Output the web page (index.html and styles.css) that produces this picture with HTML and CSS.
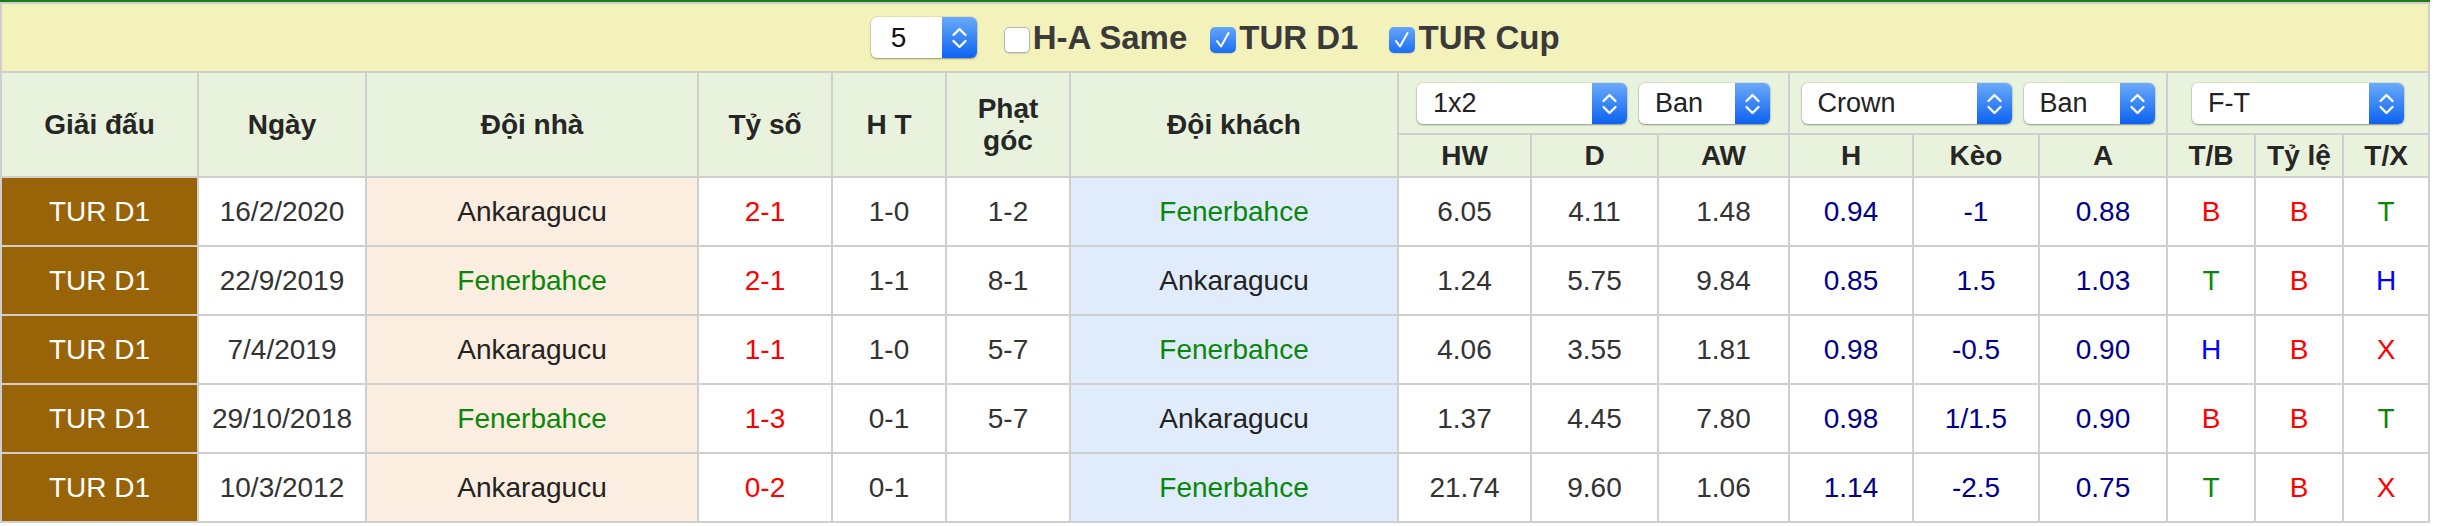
FILE: index.html
```html
<!DOCTYPE html>
<html lang="vi">
<head>
<meta charset="utf-8">
<title>Đối đầu</title>
<link rel="stylesheet" href="styles.css">
</head>
<body>
<div class="wrap">
<table class="tb">
<colgroup>
<col class="w-league"><col class="w-date"><col class="w-home"><col class="w-score"><col class="w-ht"><col class="w-corner"><col class="w-away">
<col class="w-hw"><col class="w-d"><col class="w-aw"><col class="w-h"><col class="w-keo"><col class="w-a"><col class="w-tb"><col class="w-tl"><col class="w-tx">
</colgroup>
<tr class="filter-row">
<td colspan="16" class="filter-cell">
<div class="filters">
<div class="sel sel-n"><span class="txt">5</span><span class="btn"><svg viewBox="0 0 35 41" width="35" height="41"><polyline points="11.5,18 17.5,12 23.5,18" /><polyline points="11.5,24 17.5,30 23.5,24" /></svg></span></div>
<label class="chk first"><span class="box"></span>H-A Same</label>
<label class="chk"><span class="box on"><svg viewBox="0 0 26 26" width="26" height="26"><polyline points="7,14 11,19.5 18.5,6" /></svg></span>TUR D1</label>
<label class="chk last"><span class="box on"><svg viewBox="0 0 26 26" width="26" height="26"><polyline points="7,14 11,19.5 18.5,6" /></svg></span>TUR Cup</label>
</div>
</td>
</tr>
<tr class="hd1">
<th rowspan="2">Giải đấu</th>
<th rowspan="2">Ngày</th>
<th rowspan="2">Đội nhà</th>
<th rowspan="2">Tỷ số</th>
<th rowspan="2">H T</th>
<th rowspan="2"><span class="narrow">Phạt góc</span></th>
<th rowspan="2">Đội khách</th>
<th colspan="3"><div class="sels"><div class="sel s-wide"><span class="txt">1x2</span><span class="btn"><svg viewBox="0 0 35 41" width="35" height="41"><polyline points="11.5,18 17.5,12 23.5,18" /><polyline points="11.5,24 17.5,30 23.5,24" /></svg></span></div><div class="sel s-narrow"><span class="txt">Ban</span><span class="btn"><svg viewBox="0 0 35 41" width="35" height="41"><polyline points="11.5,18 17.5,12 23.5,18" /><polyline points="11.5,24 17.5,30 23.5,24" /></svg></span></div></div></th>
<th colspan="3"><div class="sels"><div class="sel s-wide"><span class="txt">Crown</span><span class="btn"><svg viewBox="0 0 35 41" width="35" height="41"><polyline points="11.5,18 17.5,12 23.5,18" /><polyline points="11.5,24 17.5,30 23.5,24" /></svg></span></div><div class="sel s-narrow"><span class="txt">Ban</span><span class="btn"><svg viewBox="0 0 35 41" width="35" height="41"><polyline points="11.5,18 17.5,12 23.5,18" /><polyline points="11.5,24 17.5,30 23.5,24" /></svg></span></div></div></th>
<th colspan="3"><div class="sels"><div class="sel s-ft"><span class="txt">F-T</span><span class="btn"><svg viewBox="0 0 35 41" width="35" height="41"><polyline points="11.5,18 17.5,12 23.5,18" /><polyline points="11.5,24 17.5,30 23.5,24" /></svg></span></div></div></th>
</tr>
<tr class="hd2">
<th>HW</th><th>D</th><th>AW</th><th>H</th><th>Kèo</th><th>A</th><th>T/B</th><th>Tỷ lệ</th><th>T/X</th>
</tr>
<tr class="row">
<td class="lg">TUR D1</td><td class="dt">16/2/2020</td><td class="home">Ankaragucu</td><td class="sc">2-1</td><td class="dt">1-0</td><td class="dt">1-2</td><td class="away gr">Fenerbahce</td>
<td class="dt">6.05</td><td class="dt">4.11</td><td class="dt">1.48</td><td class="nv">0.94</td><td class="nv">-1</td><td class="nv">0.88</td><td class="r">B</td><td class="r">B</td><td class="g">T</td>
</tr>
<tr class="row">
<td class="lg">TUR D1</td><td class="dt">22/9/2019</td><td class="home gr">Fenerbahce</td><td class="sc">2-1</td><td class="dt">1-1</td><td class="dt">8-1</td><td class="away">Ankaragucu</td>
<td class="dt">1.24</td><td class="dt">5.75</td><td class="dt">9.84</td><td class="nv">0.85</td><td class="nv">1.5</td><td class="nv">1.03</td><td class="g">T</td><td class="r">B</td><td class="b">H</td>
</tr>
<tr class="row">
<td class="lg">TUR D1</td><td class="dt">7/4/2019</td><td class="home">Ankaragucu</td><td class="sc">1-1</td><td class="dt">1-0</td><td class="dt">5-7</td><td class="away gr">Fenerbahce</td>
<td class="dt">4.06</td><td class="dt">3.55</td><td class="dt">1.81</td><td class="nv">0.98</td><td class="nv">-0.5</td><td class="nv">0.90</td><td class="b">H</td><td class="r">B</td><td class="r">X</td>
</tr>
<tr class="row">
<td class="lg">TUR D1</td><td class="dt">29/10/2018</td><td class="home gr">Fenerbahce</td><td class="sc">1-3</td><td class="dt">0-1</td><td class="dt">5-7</td><td class="away">Ankaragucu</td>
<td class="dt">1.37</td><td class="dt">4.45</td><td class="dt">7.80</td><td class="nv">0.98</td><td class="nv">1/1.5</td><td class="nv">0.90</td><td class="r">B</td><td class="r">B</td><td class="g">T</td>
</tr>
<tr class="row">
<td class="lg">TUR D1</td><td class="dt">10/3/2012</td><td class="home">Ankaragucu</td><td class="sc">0-2</td><td class="dt">0-1</td><td class="dt"></td><td class="away gr">Fenerbahce</td>
<td class="dt">21.74</td><td class="dt">9.60</td><td class="dt">1.06</td><td class="nv">1.14</td><td class="nv">-2.5</td><td class="nv">0.75</td><td class="g">T</td><td class="r">B</td><td class="r">X</td>
</tr>
</table>
</div>
</body>
</html>
```

FILE: styles.css
```css
html, body {
  margin: 0;
  padding: 0;
  background: #ffffff;
}

body {
  font-family: "Liberation Sans", Arial, sans-serif;
  color: #333333;
}

.wrap {
  width: 2430px;
  border-top: 2px solid #1c7a1c;
}

.tb {
  width: 2430px;
  table-layout: fixed;
  border-collapse: separate;
  border-spacing: 2px;
  background: #cfcfcf;
}

.w-league { width: 195px; }
.w-date { width: 166px; }
.w-home { width: 330px; }
.w-score { width: 132px; }
.w-ht { width: 112px; }
.w-corner { width: 122px; }
.w-away { width: 326px; }
.w-hw { width: 131px; }
.w-d { width: 125px; }
.w-aw { width: 129px; }
.w-h { width: 122px; }
.w-keo { width: 124px; }
.w-a { width: 126px; }
.w-tb { width: 86px; }
.w-tl { width: 86px; }
.w-tx { width: 84px; }

td, th {
  padding: 0;
  text-align: center;
  vertical-align: middle;
}

/* filter row */
.filter-cell {
  background: #f4f2bb;
  height: 67px;
}

.filters {
  display: flex;
  justify-content: center;
  align-items: center;
  font-size: 33px;
  font-weight: bold;
  color: #3a3a3a;
}

.chk {
  display: flex;
  align-items: center;
  margin-left: 23px;
}

.chk.first {
  margin-left: 27px;
}

.chk.last {
  margin-left: 31px;
}

.box {
  width: 26px;
  height: 26px;
  box-sizing: border-box;
  border: 1px solid #b3b3b3;
  border-radius: 5px;
  background: #ffffff;
  margin-right: 3px;
  margin-top: 4px;
  display: flex;
  box-shadow: 0 1px 1px rgba(0, 0, 0, 0.12);
}

.box.on {
  border: none;
  background: linear-gradient(#66a6fa, #1a6ef4);
}

.box svg polyline {
  fill: none;
  stroke: #ffffff;
  stroke-width: 2;
  stroke-linecap: round;
  stroke-linejoin: round;
}

/* select look-alike */
.sel {
  display: flex;
  align-items: stretch;
  height: 41px;
  border-radius: 6px;
  background: #ffffff;
  box-shadow: 0 1px 2px rgba(0, 0, 0, 0.35), 0 0 0 1px rgba(0, 0, 0, 0.06);
  overflow: hidden;
  font-weight: normal;
  text-align: left;
}

.sel .txt {
  flex: 1;
  display: flex;
  align-items: center;
  padding-left: 16px;
  font-size: 27px;
  color: #222222;
}

.sel .btn {
  width: 35px;
  flex: none;
  background: linear-gradient(#6aaafa, #0c62f2);
  display: flex;
}

.sel .btn svg polyline {
  fill: none;
  stroke: #ffffff;
  stroke-width: 2.3;
  stroke-linecap: round;
  stroke-linejoin: round;
}

.sel-n {
  width: 106px;
}

.sel-n .txt {
  padding-left: 20px;
  font-size: 28px;
  color: #111111;
}

.sels {
  display: flex;
  justify-content: center;
  gap: 12px;
}

.s-wide { width: 210px; }
.s-narrow { width: 131px; }
.s-ft { width: 212px; }

/* header */
th {
  background: #e9f2dc;
  font-size: 28px;
  font-weight: bold;
  color: #262626;
  line-height: 32px;
}

th .narrow {
  display: inline-block;
  width: 90px;
}

.hd1 th {
  height: 60px;
}

.hd1 th[rowspan] {
  height: 103px;
}

.hd2 th {
  height: 41px;
}

/* rows */
.row td {
  height: 67px;
  background: #ffffff;
  font-size: 28px;
}

.row td.lg {
  background: #996308;
  color: #ffffff;
}

.row td.home {
  background: #fbede0;
  color: #222222;
}

.row td.away {
  background: #e0ebfb;
  color: #222222;
}

.row td.gr {
  color: #0a870a;
}

.dt { color: #333333; }
.sc { color: #ff0000; }
.nv { color: #00008b; }
.r { color: #ff0000; }
.g { color: #0a870a; }
.b { color: #0000ff; }
```
